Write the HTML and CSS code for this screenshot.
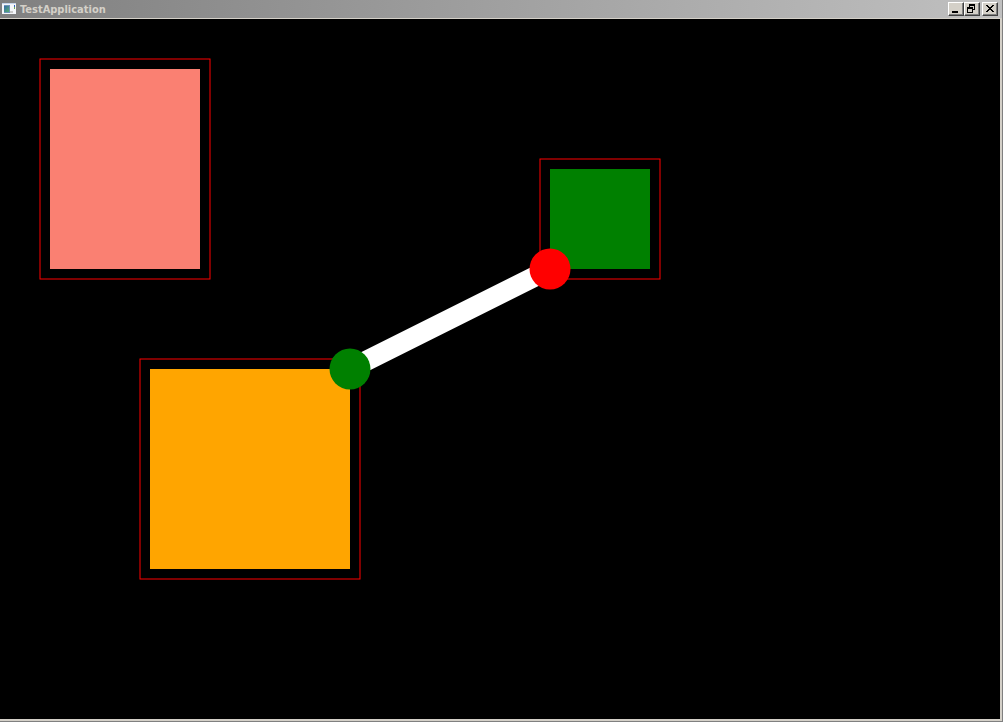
FILE: index.html
```html
<!DOCTYPE html>
<html lang="en">
<head>
<meta charset="utf-8">
<title>TestApplication</title>
<link rel="stylesheet" href="styles.css">
</head>
<body>
<div class="window">
  <header class="titlebar">
    <svg class="app-icon" width="16" height="16" viewBox="0 0 16 16" shape-rendering="crispEdges" aria-hidden="true">
      <defs>
        <linearGradient id="pane" x1="0" y1="0" x2="1" y2="1">
          <stop offset="0" stop-color="#3568a8"/>
          <stop offset="1" stop-color="#58b070"/>
        </linearGradient>
      </defs>
      <path fill="#f4f6fa" d="M0 2h14v11H0z"/>
      <path fill="#c4d2e8" d="M0 2h14v1H0z"/>
      <path fill="#6f93b8" d="M2 4h6v8H2z"/>
      <path fill="url(#pane)" d="M2 5h5v6H2z"/>
      <path fill="#3060c0" d="M12 4h1v2h-1z"/>
      <path fill="#70a850" d="M12 6h1v2h-1z"/>
      <path fill="#c8c8c8" d="M8 10h3v2H8z"/>
    </svg>
    <h1 class="title">TestApplication</h1>
    <div class="controls">
      <button class="control" type="button" aria-label="Minimize">
        <svg width="12" height="10" viewBox="0 0 12 10" shape-rendering="crispEdges"><path d="M2 8h6v2H2z"/></svg>
      </button>
      <button class="control" type="button" aria-label="Restore">
        <svg width="12" height="10" viewBox="0 0 12 10" shape-rendering="crispEdges"><path fill-rule="evenodd" d="M3 1h6v6H7v3H1V4h2zM4 3v1h3v2h1V3zM2 6v3h4V6z"/></svg>
      </button>
      <button class="control close" type="button" aria-label="Close">
        <svg width="12" height="10" viewBox="0 0 12 10" shape-rendering="crispEdges"><path d="M2 2h2v1h1v1h2V3h1V2h2v1H9v1H8v1H7v1h1v1h1v1h1v1H8V8H7V7H5v1H4v1H2V8h1V7h1V6h1V5H4V4H3V3H2z"/></svg>
      </button>
    </div>
  </header>
  <main class="client">
    <svg class="scene" role="img" aria-label="Three boxes and a connector">
      <g class="outline">
        <rect x="40" y="40" width="170" height="220"/>
        <rect x="540" y="140" width="120" height="120"/>
        <rect x="140" y="340" width="220" height="220"/>
      </g>
      <rect class="salmon" x="50" y="50" width="150" height="200"/>
      <rect class="green" x="550" y="150" width="100" height="100"/>
      <rect class="orange" x="150" y="350" width="200" height="200"/>
      <line class="connector" x1="350" y1="350" x2="550" y2="250"/>
      <circle class="green" cx="350" cy="350" r="20.5"/>
      <circle class="red" cx="550" cy="250" r="20.5"/>
    </svg>
  </main>
</div>
</body>
</html>
```
FILE: styles.css
```css
* {
  box-sizing: border-box;
}

body {
  margin: 0;
  background: #808080;
}

.window {
  display: flex;
  flex-direction: column;
  height: 100vh;
  border: solid #808080;
  border-width: 0 1px 1px 0;
  background: #d4d0c8;
}

.titlebar {
  display: flex;
  align-items: center;
  height: 18px;
  padding: 0 4px 0 2px;
  background: linear-gradient(to right, #808080, #c0c0c0);
}

.app-icon {
  flex: none;
}

.title {
  flex: 1;
  margin: 0 0 0 2px;
  padding-top: 2px;
  color: #d4d0c8;
  font: bold 11px/16px "DejaVu Sans Condensed", "DejaVu Sans", sans-serif;
}

.controls {
  display: flex;
}

.control {
  display: flex;
  width: 16px;
  height: 14px;
  padding: 0 1px 1px;
  border: 1px solid;
  border-color: #ffffff #404040 #404040 #ffffff;
  background: #d4d0c8;
  box-shadow: inset -1px -1px #808080;
}

.control svg {
  flex: none;
}

.close {
  margin-left: 2px;
}

.client {
  flex: 1;
  min-height: 0;
  margin: 1px 2px 2px 0;
  background: #000000;
}

.scene {
  display: block;
  width: 100%;
  height: 100%;
}

.outline {
  fill: none;
  stroke: #ff0000;
  stroke-width: 1px;
}

.salmon {
  fill: #fa8072;
}

.green {
  fill: #008000;
}

.orange {
  fill: #ffa500;
}

.red {
  fill: #ff0000;
}

.connector {
  stroke: #ffffff;
  stroke-width: 20px;
}
```
